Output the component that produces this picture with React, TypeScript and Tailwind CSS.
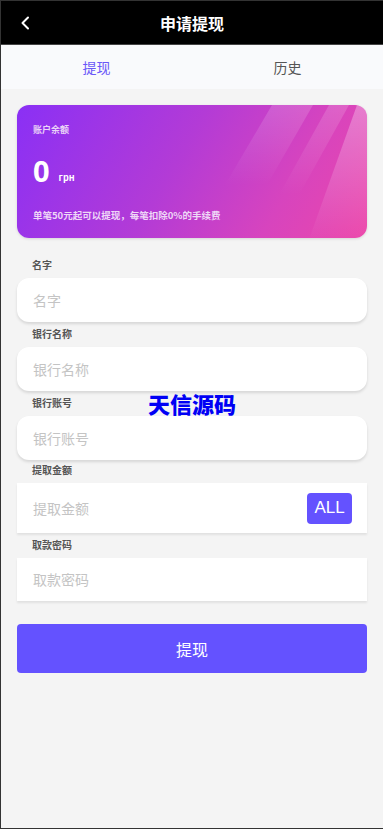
import React from "react";

const font = { fontFamily: '"Noto Sans CJK SC", "Noto Sans", sans-serif' };

function Field({ label, placeholder, round = true, all = false, h = "h-[44px]", top = "mt-[5px]" }: { label: string; placeholder: string; round?: boolean; all?: boolean; h?: string; top?: string }) {
  return (
    <div className={top}>
      <div className="pl-[31px] text-[10px] leading-[14px] font-bold text-[#555]">{label}</div>
      <div
        className={`mt-[6px] mx-[16px] ${h} bg-white flex items-center pl-[16px] pr-[15px] ${round ? "rounded-[12px] shadow-[0_2px_3px_rgba(0,0,0,0.12)]" : "shadow-[0_2px_2px_rgba(0,0,0,0.08)]"}`}
      >
        <span className="flex-1 text-[14px] text-[#c4c4c4]">{placeholder}</span>
        {all && (
          <span className="w-[45px] h-[31px] rounded-[4px] bg-[#6452ff] text-white text-[17px] flex items-center justify-center" style={{ fontFamily: '"Liberation Sans", Arial, sans-serif' }}>
            ALL
          </span>
        )}
      </div>
    </div>
  );
}

export default function App() {
  return (
    <div className="w-[383px] h-[829px] bg-[#f4f4f4] border-l border-t border-b border-[#333] relative overflow-hidden" style={font}>
      <div className="h-[44px] bg-black border-b border-[#444] flex items-center relative">
        <svg className="absolute left-[19px] top-[15px]" width="10" height="14" viewBox="0 0 10 14">
          <path d="M8 1.5 L2.5 7 L8 12.5" stroke="white" strokeWidth="2" fill="none" strokeLinecap="round" strokeLinejoin="round" />
        </svg>
        <div className="flex-1 text-center text-white text-[16px] font-bold">申请提现</div>
      </div>
      <div className="h-[44px] bg-[#f9fafc] flex items-center">
        <div className="flex-1 text-center text-[14px] text-[#6a57f8]">提现</div>
        <div className="flex-1 text-center text-[14px] text-[#555]">历史</div>
      </div>

      <div className="pt-[16px] px-[16px]">
        <div className="relative h-[133px] rounded-[12px] overflow-hidden bg-[linear-gradient(120deg,#8a30f5_0%,#b33bd6_45%,#d744be_75%,#ec47aa_100%)] shadow-[0_1px_3px_rgba(0,0,0,0.12)]">
          <svg className="absolute inset-0" width="350" height="133" viewBox="0 0 350 133">
            <defs>
              <linearGradient id="g1" x1="0" y1="0" x2="0" y2="1">
                <stop offset="0" stopColor="white" stopOpacity="0.16" />
                <stop offset="1" stopColor="white" stopOpacity="0" />
              </linearGradient>
              <linearGradient id="g2" x1="0" y1="0" x2="0" y2="1">
                <stop offset="0" stopColor="white" stopOpacity="0.3" />
                <stop offset="1" stopColor="white" stopOpacity="0" />
              </linearGradient>
            </defs>
            <polygon points="255,0 296,0 250,80 208,80" fill="url(#g1)" />
            <polygon points="312,0 332,0 282,90 262,90" fill="url(#g1)" />
            <polygon points="340,0 350,0 350,140 290,140" fill="url(#g2)" />
          </svg>
          <div className="relative pl-[16px]">
            <div className="pt-[19px] text-[9px] leading-[12px] font-bold text-[#e9d2f7]">账户余额</div>
            <div className="mt-[21px] flex items-end">
              <span className="text-[29px] leading-[28px] font-bold text-white" style={{ fontFamily: '"Open Sans", "Noto Sans", sans-serif' }}>0</span>
              <span className="ml-[9px] mb-[1px] text-[9px] font-bold text-white">грн</span>
            </div>
            <div className="mt-[24px] text-[9.5px] leading-[12px] font-bold text-[#efd7f7]">单笔50元起可以提现，每笔扣除0%的手续费</div>
          </div>
        </div>
      </div>

      <Field label="名字" placeholder="名字" top="mt-[20px]" />
      <Field label="银行名称" placeholder="银行名称" />
      <div className="relative">
        <Field label="银行账号" placeholder="银行账号" />
        <div className="absolute left-0 right-0 top-[-5px] text-center text-[22px] font-black text-[#0000f5] leading-[24px]">天信源码</div>
      </div>
      <Field label="提取金额" placeholder="提取金额" round={false} all h="h-[50px]" top="mt-[3px]" />
      <Field label="取款密码" placeholder="取款密码" round={false} h="h-[43px]" />

      <div className="mt-[23px] mx-[16px] h-[49px] rounded-[4px] bg-[#6452ff] flex items-center justify-center text-white text-[16px]">
        提现
      </div>
    </div>
  );
}
